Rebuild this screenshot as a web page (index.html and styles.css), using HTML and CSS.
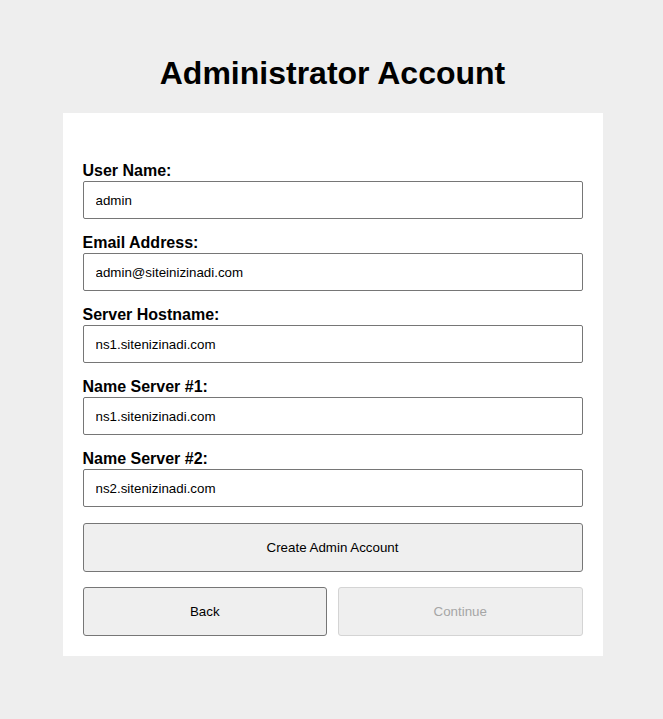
FILE: index.html
```html
<!DOCTYPE html>
<html lang="en">
<head>
<meta charset="utf-8">
<title>Administrator Account</title>
<link rel="stylesheet" href="styles.css">
</head>
<body>
<main class="page">
  <h1 class="title">Administrator Account</h1>
  <form class="card">
    <div class="field">
      <label class="label" for="user">User Name:</label>
      <input class="input" id="user" type="text" value="admin">
    </div>
    <div class="field">
      <label class="label" for="email">Email Address:</label>
      <input class="input" id="email" type="text" value="admin@siteinizinadi.com">
    </div>
    <div class="field">
      <label class="label" for="host">Server Hostname:</label>
      <input class="input" id="host" type="text" value="ns1.sitenizinadi.com">
    </div>
    <div class="field">
      <label class="label" for="ns1">Name Server #1:</label>
      <input class="input" id="ns1" type="text" value="ns1.sitenizinadi.com">
    </div>
    <div class="field">
      <label class="label" for="ns2">Name Server #2:</label>
      <input class="input" id="ns2" type="text" value="ns2.sitenizinadi.com">
    </div>
    <button class="btn btn-wide" type="button">Create Admin Account</button>
    <div class="btn-row">
      <button class="btn" type="button">Back</button>
      <button class="btn" type="button" disabled>Continue</button>
    </div>
  </form>
</main>
</body>
</html>
```
FILE: styles.css
```css
html, body {
  margin: 0;
  padding: 0;
  background: #eeeeee;
  font-family: "Liberation Sans", Arial, sans-serif;
  color: #000;
}
.page {
  display: flex;
  flex-direction: column;
  align-items: center;
  padding: 55px 0 0 2px;
}
.title {
  margin: 0 0 21px;
  font-size: 32px;
  line-height: 37px;
  font-weight: bold;
}
.card {
  box-sizing: border-box;
  width: 540px;
  background: #fff;
  padding: 49px 20px 20px;
  display: flex;
  flex-direction: column;
}
.field {
  display: flex;
  flex-direction: column;
  margin-bottom: 15px;
}
.label {
  font-size: 16px;
  line-height: 18px;
  font-weight: bold;
  margin-bottom: 1px;
}
.input {
  box-sizing: border-box;
  height: 38px;
  width: 100%;
  border: 1px solid #767676;
  border-radius: 2px;
  padding: 0 12px;
  font-family: "Liberation Sans", Arial, sans-serif;
  font-size: 13.33px;
  color: #000;
  background: #fff;
  outline: none;
}
.btn {
  box-sizing: border-box;
  height: 49px;
  border: 1px solid #767676;
  border-radius: 3px;
  background: #efefef;
  font-family: "Liberation Sans", Arial, sans-serif;
  font-size: 13.33px;
  color: #000;
  padding: 0;
}
.btn-wide {
  width: 100%;
  margin-top: 1px;
}
.btn-row {
  display: grid;
  grid-template-columns: 1fr 1fr;
  column-gap: 11px;
  margin-top: 15px;
}
.btn:disabled {
  border-color: #d4d4d4;
  color: #a6a6a6;
  background: #efefef;
}
```
